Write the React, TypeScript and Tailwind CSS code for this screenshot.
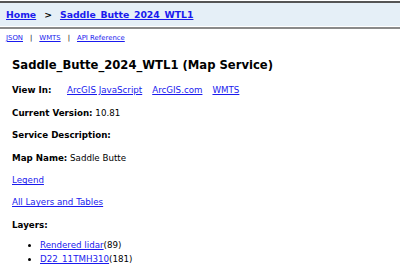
export default function App() {
  const link = "text-[#1a1aee] underline";
  return (
    <div className="w-[400px] h-[264px] overflow-hidden bg-white text-black font-['Verdana','DejaVu_Sans',sans-serif]">
      <div className="mt-[1px] border-t-2 border-[#555] bg-[#e5eff7] h-[25px] flex items-center px-[6px] text-[9.3px] font-bold">
        <a className={link}>Home</a>
        <span className="mx-[8px]">&gt;</span>
        <a className={link}>Saddle_Butte_2024_WTL1</a>
      </div>
      <div className="h-[1px] bg-white" />
      <div className="h-[2px] bg-[#8a8a8a]" />
      <div className="flex items-center gap-[7px] px-[6px] mt-[3px] text-[6.9px] h-[12px]">
        <a className={link}>JSON</a>
        <span>|</span>
        <a className={link}>WMTS</a>
        <span>|</span>
        <a className={link}>API Reference</a>
      </div>
      <div className="px-[12px] text-[8.7px]">
        <h2 className="text-[11.6px] font-bold mt-[12px] h-[20px] flex items-center">Saddle_Butte_2024_WTL1 (Map Service)</h2>
        <div className="mt-[3px] h-[23px] flex items-center">
          <b className="w-[55px]">View In:</b>
          <div className="flex gap-[10px]">
            <a className={link}>ArcGIS JavaScript</a>
            <a className={link}>ArcGIS.com</a>
            <a className={link}>WMTS</a>
          </div>
        </div>
        <div className="h-[23px] flex items-center">
          <b>Current Version:</b>&nbsp;10.81
        </div>
        <div className="h-[22px] flex items-center">
          <b>Service Description:</b>
        </div>
        <div className="h-[23px] flex items-center">
          <b>Map Name:</b>&nbsp;Saddle Butte
        </div>
        <div className="h-[22px] flex items-center">
          <a className={link}>Legend</a>
        </div>
        <div className="h-[22px] flex items-center">
          <a className={link}>All Layers and Tables</a>
        </div>
        <div className="h-[23px] flex items-center">
          <b>Layers:</b>
        </div>
        <ul className="list-disc pl-[28px] mt-[1px] leading-[14px]">
          <li><a className={link}>Rendered lidar</a>(89)</li>
          <li><a className={link}>D22_11TMH310</a>(181)</li>
        </ul>
      </div>
    </div>
  );
}
